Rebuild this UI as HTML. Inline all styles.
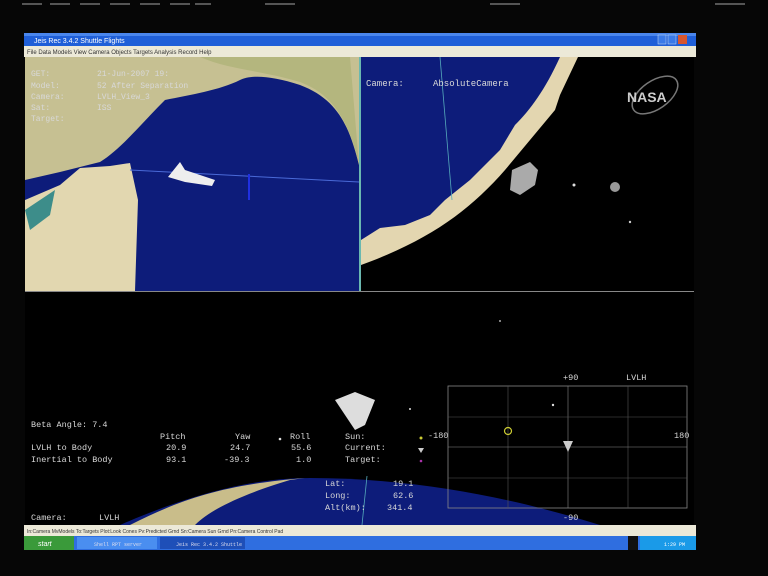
<!DOCTYPE html>
<html><head><meta charset="utf-8"><style>
body{margin:0;background:#050505;width:768px;height:576px;overflow:hidden}
svg{display:block}
text{font-family:"Liberation Mono",monospace;fill:#d8d8d8}
</style></head><body>
<svg width="768" height="576" viewBox="0 0 768 576" xmlns="http://www.w3.org/2000/svg">
<rect width="768" height="576" fill="#060606"/>
<g fill="#555"><rect x="22" y="3" width="20" height="2"/><rect x="50" y="3" width="20" height="2"/><rect x="80" y="3" width="20" height="2"/><rect x="110" y="3" width="20" height="2"/><rect x="140" y="3" width="20" height="2"/><rect x="170" y="3" width="20" height="2"/><rect x="195" y="3" width="16" height="2"/><rect x="265" y="3" width="30" height="2"/><rect x="490" y="3" width="30" height="2"/><rect x="715" y="3" width="30" height="2"/></g>
<rect x="24" y="33" width="672" height="13" fill="#1f5fd8"/>
<rect x="24" y="33" width="672" height="3" fill="#4a86ec"/>
<text x="34" y="43" font-size="7" style="fill:#fff;font-family:'Liberation Sans',sans-serif">Jeis Rec 3.4.2 Shuttle Flights</text>
<rect x="658" y="35" width="8" height="9" fill="#3a7ae8" stroke="#cde" stroke-width=".5"/><rect x="668" y="35" width="8" height="9" fill="#3a7ae8" stroke="#cde" stroke-width=".5"/><rect x="678" y="35" width="9" height="9" fill="#d8562e"/>
<rect x="24" y="46" width="672" height="11" fill="#ece9d8"/>
<text x="27" y="54" font-size="6" style="fill:#333;font-family:'Liberation Sans',sans-serif">File  Data  Models  View  Camera  Objects  Targets  Analysis  Record  Help</text>
<rect x="25" y="57" width="334" height="234" fill="#0d1c7a"/>
<path d="M25 57 L359 57 L359 165 C350 130 340 100 300 85 C270 75 250 75 240 80 C220 90 190 95 165 100 C140 125 120 150 100 162 L60 172 L25 180Z" fill="#c6c092"/>
<path d="M200 57 L350 57 L359 165 C350 125 335 95 300 82 C260 70 230 70 200 57Z" fill="#b4b67e"/>
<path d="M25 291 L25 200 L60 185 L80 168 L110 166 L130 163 L138 200 L135 291Z" fill="#e2d7b0"/>
<path d="M25 210 L55 190 L50 215 L30 230Z" fill="#3d8d8a"/>
<line x1="130" y1="170" x2="359" y2="182" stroke="#4a6ad8" stroke-width="1"/>
<line x1="249" y1="174" x2="249" y2="200" stroke="#2030e0" stroke-width="2"/>
<path d="M168 177 L180 162 L185 170 L215 180 L212 186 L185 182Z" fill="#eeeeee"/>
<g font-size="8" style="fill:#9c9c8c"><text x="31" y="76">GET:</text><text x="97" y="76">21-Jun-2007 19:</text><text x="31" y="88">Model:</text><text x="97" y="88">52 After Separation</text><text x="31" y="99">Camera:</text><text x="97" y="99">LVLH_View_3</text><text x="31" y="110">Sat:</text><text x="97" y="110">ISS</text><text x="31" y="121">Target:</text></g>
<rect x="359" y="57" width="2" height="234" fill="#6ab8b0"/>
<rect x="361" y="57" width="333" height="234" fill="#000"/>
<path d="M361 57 L565 57 C540 130 470 220 361 265Z" fill="#0d1c7a"/>
<path d="M361 265 C430 240 470 210 505 170 L530 140 L555 110 L560 95 L578 57 L560 57 C545 90 530 110 515 125 L500 150 L470 180 L445 200 L430 215 L405 225 L380 228 L361 240Z" fill="#e3d6b0"/>
<line x1="440" y1="57" x2="452" y2="200" stroke="#5ab" stroke-width=".8"/>
<path d="M512 170 L530 162 L538 170 L535 185 L520 195 L510 190Z" fill="#aaa"/>
<circle cx="615" cy="187" r="5" fill="#999"/><circle cx="574" cy="185" r="1.5" fill="#ddd"/><circle cx="630" cy="222" r="1.2" fill="#ccc"/>
<text x="366" y="86" font-size="9">Camera:</text><text x="433" y="86" font-size="9">AbsoluteCamera</text>
<ellipse cx="655" cy="95" rx="26" ry="14" fill="none" stroke="#777" stroke-width="1.5" transform="rotate(-35 655 95)"/>
<text x="627" y="102" font-size="14" font-weight="bold" style="fill:#ccc;font-family:'Liberation Sans',sans-serif">NASA</text>
<rect x="25" y="291" width="669" height="1" fill="#888"/>
<rect x="25" y="292" width="669" height="233" fill="#000"/>
<path d="M120 525 C200 490 260 478 310 478 C420 478 520 500 600 525Z" fill="#0d1c7a"/>
<path d="M130 525 C180 500 220 485 305 478 L290 480 C240 495 210 510 195 525Z" fill="#c9bd8a"/>
<line x1="367" y1="476" x2="362" y2="525" stroke="#5ab" stroke-width=".8"/>
<path d="M335 400 L355 392 L375 400 L365 425 L355 430 L345 415Z" fill="#ddd"/>
<g font-size="8.5"><text x="31" y="427">Beta Angle: 7.4</text>
<text x="160" y="439">Pitch</text><text x="235" y="439">Yaw</text><text x="290" y="439">Roll</text><text x="345" y="439">Sun:</text>
<text x="31" y="450">LVLH to Body</text><text x="166" y="450">20.9</text><text x="230" y="450">24.7</text><text x="291" y="450">55.6</text><text x="345" y="450">Current:</text>
<text x="31" y="462">Inertial to Body</text><text x="166" y="462">93.1</text><text x="224" y="462">-39.3</text><text x="296" y="462">1.0</text><text x="345" y="462">Target:</text>
<text x="325" y="486">Lat:</text><text x="393" y="486">19.1</text><text x="325" y="498">Long:</text><text x="393" y="498">62.6</text><text x="325" y="510">Alt(km):</text><text x="387" y="510">341.4</text>
<text x="31" y="520">Camera:</text><text x="99" y="520">LVLH</text>
<text x="563" y="380">+90</text><text x="626" y="380">LVLH</text><text x="428" y="438">-180</text><text x="674" y="438">180</text><text x="563" y="520">-90</text></g>
<rect x="448" y="386" width="239" height="122" fill="none" stroke="#888" stroke-width=".8"/>
<g stroke="#555" stroke-width=".6"><line x1="508" y1="386" x2="508" y2="508"/><line x1="568" y1="386" x2="568" y2="508" stroke="#888"/><line x1="628" y1="386" x2="628" y2="508"/><line x1="448" y1="447" x2="687" y2="447" stroke="#888"/><line x1="448" y1="417" x2="687" y2="417"/><line x1="448" y1="478" x2="687" y2="478"/></g>
<circle cx="508" cy="431" r="3.5" fill="none" stroke="#cc3" stroke-width="1.2"/>
<path d="M563 441 L573 441 L568 452Z" fill="#ccc"/>
<circle cx="421" cy="438" r="1.5" fill="#cc3"/><path d="M418 448 L424 448 L421 453Z" fill="#ccc"/><circle cx="421" cy="461" r="1.3" fill="#a3a"/>
<circle cx="553" cy="405" r="1.2" fill="#ddd"/><circle cx="280" cy="439" r="1.3" fill="#ddd"/><circle cx="410" cy="409" r="1" fill="#ddd"/><circle cx="500" cy="321" r="1" fill="#aaa"/>
<rect x="24" y="525" width="672" height="11" fill="#ece9d8"/>
<text x="27" y="533" font-size="5" style="fill:#333;font-family:'Liberation Sans',sans-serif">In:Camera  MvModels  To:Targets  Plot:Look Cones  Pv:Predicted Grnd  Sn:Camera Sun Grnd  Pn:Camera Control Pad</text>
<rect x="24" y="536" width="672" height="14" fill="#2f6ee0"/>
<rect x="24" y="536" width="50" height="14" fill="#3a9a3a"/>
<text x="38" y="546" font-size="7" font-style="italic" style="fill:#fff;font-family:'Liberation Sans',sans-serif">start</text>
<rect x="77" y="537" width="80" height="12" fill="#4a8ef0"/><rect x="160" y="537" width="85" height="12" fill="#1e4fb8"/>
<text x="94" y="546" font-size="5" style="fill:#dde">Shell RPT server</text><text x="176" y="546" font-size="5" style="fill:#dde">Jeis Rec 3.4.2 Shuttle</text>
<rect x="628" y="536" width="10" height="14" fill="#111"/>
<rect x="640" y="536" width="56" height="14" fill="#1a9ae8"/>
<text x="664" y="546" font-size="5" style="fill:#fff">1:29 PM</text>
</svg>
</body></html>
